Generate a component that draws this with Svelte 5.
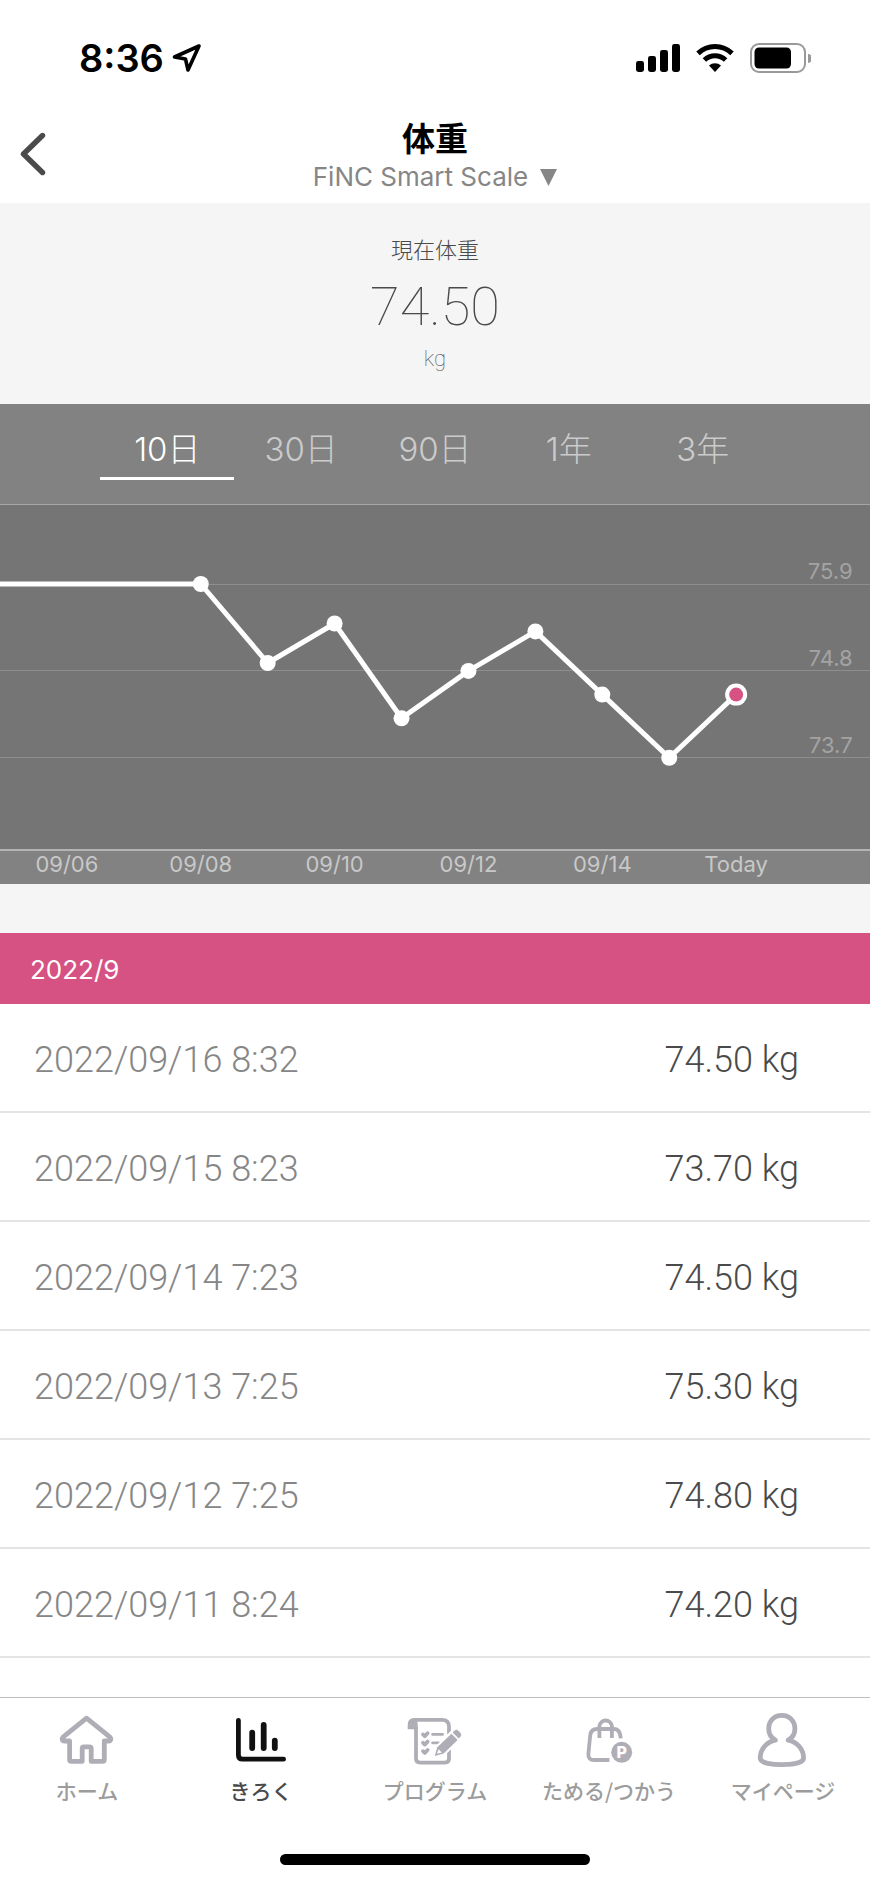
<script lang="ts">
  type IconName = "home" | "record" | "program" | "points" | "mypage";

  const CURRENT = "74.50";

  const RANGES = ["10日", "30日", "90日", "1年", "3年"];

  // The plot is divided into 13 equal day columns
  const COLUMNS = 13;
  const FIRST_COLUMN = 3;
  const PLOT_HEIGHT = 344;
  const TOP_VALUE = 75.9;
  const TOP_Y = 79;
  const PX_PER_KG = 79;

  const gridValues = [75.9, 74.8, 73.7];
  const weights = [75.9, 74.9, 75.4, 74.2, 74.8, 75.3, 74.5, 73.7, 74.5];
  const axisLabels = ["09/06", "09/08", "09/10", "09/12", "09/14", "Today"];

  const records = [
    { date: "2022/09/16 8:32", weight: "74.50 kg" },
    { date: "2022/09/15 8:23", weight: "73.70 kg" },
    { date: "2022/09/14 7:23", weight: "74.50 kg" },
    { date: "2022/09/13 7:25", weight: "75.30 kg" },
    { date: "2022/09/12 7:25", weight: "74.80 kg" },
    { date: "2022/09/11 8:24", weight: "74.20 kg" },
  ];

  const navItems: { icon: IconName; label: string }[] = [
    { icon: "home", label: "ホーム" },
    { icon: "record", label: "きろく" },
    { icon: "program", label: "プログラム" },
    { icon: "points", label: "ためる/つかう" },
    { icon: "mypage", label: "マイページ" },
  ];

  let range = $state("10日");
  let activeNav = $state<IconName>("record");

  function yOf(value: number) {
    return TOP_Y + (TOP_VALUE - value) * PX_PER_KG;
  }

  const points = weights.map((value, i) => ({
    x: `${((FIRST_COLUMN + i) / COLUMNS) * 100}%`,
    y: yOf(value),
  }));
  const lastPoint = points[points.length - 1];
</script>

<div class="screen">
  <div class="status-bar">
    <div class="clock">
      <span>8:36</span>
      <svg width="30" height="30" viewBox="0 0 30 30" aria-hidden="true">
        <path
          d="M27 3 L2.5 14 L13.5 16 L16 27 Z"
          fill="none"
          stroke="#000"
          stroke-width="3.6"
          stroke-linejoin="round"
        />
      </svg>
    </div>
    <div class="indicators">
      <svg width="44" height="28" viewBox="0 0 44 28" aria-hidden="true">
        <rect x="0" y="17" width="8" height="11" rx="2.4" />
        <rect x="12" y="12" width="8" height="16" rx="2.4" />
        <rect x="24" y="6" width="8" height="22" rx="2.4" />
        <rect x="36" y="0" width="8" height="28" rx="2.4" />
      </svg>
      <svg width="38" height="28" viewBox="0 0 38 28" aria-hidden="true">
        <g fill="none" stroke="#000" stroke-width="5">
          <path d="M2 9.4 A24.5 24.5 0 0 1 36 9.4" />
          <path d="M8.4 16 A15.5 15.5 0 0 1 29.6 16" />
        </g>
        <path d="M19 28 L13 21.6 A9 9 0 0 1 25 21.6 Z" />
      </svg>
      <svg width="61" height="30" viewBox="0 0 61 30" aria-hidden="true">
        <rect x="1" y="1" width="54" height="28" rx="8" fill="none" stroke="#999" stroke-width="2" />
        <rect x="4.5" y="4.5" width="36.5" height="21" rx="4.5" />
        <path d="M58 11 A4.4 4.4 0 0 1 58 20 Z" fill="#999" />
      </svg>
    </div>
  </div>

  <header class="header">
    <button class="back" aria-label="戻る">
      <svg width="26" height="44" viewBox="0 0 26 44" aria-hidden="true">
        <path
          d="M22.5 3.5 L3.5 22 L22.5 40.5"
          fill="none"
          stroke="#4a4a4a"
          stroke-width="5.4"
          stroke-linecap="round"
          stroke-linejoin="round"
        />
      </svg>
    </button>
    <div class="titles">
      <h1>体重</h1>
      <button class="device">
        FiNC Smart Scale
        <svg width="17" height="17" viewBox="0 0 17 17" aria-hidden="true">
          <path d="M0 0 H17 L8.5 17 Z" fill="#868686" />
        </svg>
      </button>
    </div>
  </header>

  <section class="current">
    <p class="current-label">現在体重</p>
    <p class="current-value">{CURRENT}</p>
    <p class="current-unit">kg</p>
  </section>

  <section class="graph">
    <div class="ranges">
      {#each RANGES as item}
        <button class="range" class:active={range === item} onclick={() => (range = item)}>
          {item}
        </button>
      {/each}
    </div>

    <svg class="plot" width="100%" height={PLOT_HEIGHT} role="img" aria-label="体重グラフ">
      {#each gridValues as value}
        <line class="grid" x1="0" x2="100%" y1={yOf(value)} y2={yOf(value)} />
        <text class="grid-label" x="98%" y={yOf(value) - 5}>{value}</text>
      {/each}
      <line class="trend" x1="0" x2={points[0].x} y1={points[0].y} y2={points[0].y} />
      {#each points.slice(1) as point, i}
        <line class="trend" x1={points[i].x} y1={points[i].y} x2={point.x} y2={point.y} />
      {/each}
      {#each points as point}
        <circle cx={point.x} cy={point.y} r="8" fill="#fff" />
      {/each}
      <circle cx={lastPoint.x} cy={lastPoint.y} r="11" fill="#fff" />
      <circle cx={lastPoint.x} cy={lastPoint.y} r="7" fill="#d65282" />
    </svg>

    <div class="axis">
      {#each axisLabels as label}
        <span>{label}</span>
      {/each}
    </div>
  </section>

  <section class="history">
    <h2>2022/9</h2>
    <table>
      <tbody>
        {#each records as record}
          <tr>
            <td class="date">{record.date}</td>
            <td class="weight">{record.weight}</td>
          </tr>
        {/each}
      </tbody>
    </table>
  </section>

  <footer class="bottom">
    <nav>
      {#each navItems as item}
        <button
          class="nav-item"
          class:active={activeNav === item.icon}
          onclick={() => (activeNav = item.icon)}
        >
          <svg width="60" height="60" viewBox="0 0 60 60" aria-hidden="true">
            {#if item.icon === "home"}
              <path
                class="stroke"
                d="M29.5 8.2 L6 27.2 C4.4 28.7 5.2 31 7.4 31 H12.6 V49.5 Q12.6 51.4 14.5 51.4 H25.2 V38.6 Q25.2 36.8 27 36.8 H32.4 Q34.2 36.8 34.2 38.6 V51.4 H45.5 Q47.3 51.4 47.3 49.5 V31 H51.6 C53.8 31 54.6 28.7 53 27.2 Z"
              />
            {:else if item.icon === "record"}
              <path class="stroke" d="M7.4 10.5 V45 Q7.4 49.2 11.6 49.2 H52.6" />
              <path class="stroke bars" d="M21.2 22.6 V38 M32.7 15 V38 M43.8 30.6 V38" />
            {:else if item.icon === "program"}
              <path
                class="stroke thin"
                d="M11 17 V48.6 Q11 52.6 15 52.6 H40 Q44 52.6 44 48.6 V40 M44 23 V16.5 Q44 9.8 37.3 9.8 H9"
              />
              <path class="solid" d="M2.7 19.3 V15 Q2.7 8 9.4 8 Q12.6 10 12.6 14 V19.3 Z" />
              <path
                class="stroke thin"
                d="M18 24.4 L19.8 26.2 L22.6 23.2 M18 32.8 L19.8 34.6 L22.6 31.6 M18 41.2 L19.8 43 L22.6 40"
              />
              <path class="stroke line" d="M27.6 24.4 H37.6 M27.6 32.8 H33.6" />
              <path class="knockout" d="M29.7 46 L32.3 37.3 L47 22.6 L52 20 L56.6 25 L53.4 29.4 L38.7 43.6 Z" />
              <path class="solid" d="M29.7 46 L32.3 37.3 L46.4 23.7 L52.6 30 L38.7 43.6 Z" />
              <path class="solid" d="M47.6 22.5 L49.4 20.7 Q51.4 19 53.4 20.8 L55.4 22.8 Q57.2 24.8 55.4 26.8 L53.8 28.6 Z" />
              <path class="hole" d="M32 43.8 L33.6 39.2 L36.8 42.4 Z" />
            {:else if item.icon === "points"}
              <path
                class="stroke thin butt"
                d="M30.4 50 H15 Q9 50 9.4 43.6 L11.2 25.4 Q12 19 18 19 H35.4 Q41 19 41.8 28.4"
              />
              <path class="stroke thin butt" d="M20.4 28 V16 A6.3 6.3 0 0 1 32.9 16 V28" />
              <circle class="solid" cx="42.7" cy="42.3" r="10.5" />
              <text class="coin" x="42.7" y="48">P</text>
            {:else}
              <path
                class="stroke"
                d="M22.4 30.2 C18.2 27.8 15.7 23.8 15.7 18.8 C15.7 11 21.2 5.4 28.8 5.4 C36.4 5.4 41.9 11 41.9 18.8 C41.9 23.8 39.4 27.8 35.2 30.2 C44.2 31.8 50.6 39.6 50.6 48 C50.6 53.4 37.6 54.6 28.8 54.6 C20 54.6 7.2 53.4 7.2 48 C7.2 39.6 13.4 31.8 22.4 30.2 Z"
              />
            {/if}
          </svg>
          <span>{item.label}</span>
        </button>
      {/each}
    </nav>
    <div class="home-indicator"></div>
  </footer>
</div>

<style>
  :global(body) {
    margin: 0;
    background: #fff;
  }

  .screen {
    display: flex;
    flex-direction: column;
    min-height: 100vh;
    background: #fff;
    color: #4a4a4a;
    font-family: Inter, "Noto Sans CJK JP", sans-serif;
  }

  button {
    padding: 0;
    background: none;
    border: none;
    color: inherit;
    font: inherit;
    cursor: pointer;
  }

  h1,
  h2,
  p {
    margin: 0;
    font-weight: 400;
  }

  svg {
    display: block;
  }

  .status-bar {
    display: flex;
    align-items: center;
    justify-content: space-between;
    height: 116px;
    padding: 0 59px 0 79px;
    color: #000;
  }

  .clock {
    display: flex;
    align-items: center;
    gap: 8px;
    font-size: 38px;
    font-weight: 600;
  }

  .indicators {
    display: flex;
    align-items: center;
    gap: 16px;
  }

  .header {
    display: grid;
    grid-template-columns: 80px 1fr 80px;
    padding: 3px 0 8px;
  }

  .back {
    display: flex;
    align-items: center;
    height: 70px;
    padding-left: 20px;
  }

  .titles {
    display: flex;
    flex-direction: column;
    align-items: center;
  }

  h1 {
    color: #000;
    font-size: 33px;
    font-weight: 700;
    line-height: 40px;
  }

  .device {
    display: flex;
    align-items: center;
    gap: 12px;
    color: #868686;
    font-size: 26px;
    line-height: 36px;
  }

  .current {
    padding: 31px 0 33px;
    background: #f5f5f5;
    text-align: center;
  }

  .current-label {
    font-size: 22px;
    font-weight: 300;
    line-height: 32px;
  }

  .current-value {
    font-family: Roboto, sans-serif;
    font-size: 54px;
    font-weight: 100;
    line-height: 81px;
  }

  .current-unit {
    font-family: Roboto, sans-serif;
    font-size: 22px;
    font-weight: 100;
    line-height: 24px;
  }

  .graph {
    background: #828282;
  }

  .ranges {
    display: grid;
    grid-template-columns: repeat(5, 1fr);
    padding: 0 11.54% 24px;
    border-bottom: 1px solid #a6a6a6;
  }

  .range {
    height: 76px;
    padding-top: 16px;
    border-bottom: 3px solid transparent;
    color: #cbcbcb;
    font-size: 33px;
    font-weight: 300;
    line-height: 40px;
  }

  .range.active {
    border-color: #fff;
    color: #fff;
  }

  .plot {
    background: #757575;
  }

  .grid {
    stroke: #8e8e8e;
    stroke-width: 1;
    shape-rendering: crispEdges;
  }

  .grid-label {
    fill: #a3a3a3;
    font-size: 22px;
    text-anchor: end;
  }

  .trend {
    stroke: #fff;
    stroke-width: 5;
  }

  .axis {
    display: grid;
    grid-template-columns: repeat(13, 1fr);
    height: 33px;
    border-top: 2px solid #b4b4b4;
    color: #c8c8c8;
    font-size: 22px;
    line-height: 26px;
    text-align: center;
  }

  .axis span {
    grid-column: span 2;
  }

  .history {
    padding-top: 49px;
    background: #f5f5f5;
  }

  h2 {
    padding: 3px 30px 0;
    background: #d65282;
    color: #fff;
    font-size: 26px;
    line-height: 68px;
  }

  table {
    width: 100%;
    border-collapse: collapse;
    background: #fff;
    font-family: Roboto, sans-serif;
    font-size: 36px;
    font-weight: 300;
  }

  td {
    height: 103px;
    padding: 4px 34px 0;
    border-bottom: 2px solid #e4e4e4;
  }

  .date {
    color: #868686;
  }

  .weight {
    padding-right: 71px;
    text-align: right;
  }

  .bottom {
    margin-top: auto;
    padding: 12px 0 18px;
    border-top: 1px solid #bdbdbd;
  }

  nav {
    display: grid;
    grid-template-columns: repeat(5, 1fr);
  }

  .nav-item {
    display: flex;
    flex-direction: column;
    align-items: center;
    gap: 8px;
    color: #afaeb7;
    font-family: "Noto Sans CJK JP", sans-serif;
    font-size: 21px;
    font-weight: 500;
    line-height: 24px;
  }

  .nav-item span {
    color: #9c9c9c;
  }

  .nav-item.active {
    color: #111;
  }

  .nav-item.active span {
    color: #4a4a4a;
  }

  .stroke {
    fill: none;
    stroke: currentColor;
    stroke-width: 4.8;
    stroke-linecap: round;
    stroke-linejoin: round;
  }

  .stroke.bars {
    stroke-width: 5.8;
  }

  .stroke.thin {
    stroke-width: 3.8;
  }

  .stroke.line {
    stroke-width: 2.8;
  }

  .stroke.butt {
    stroke-linecap: butt;
  }

  .solid {
    fill: currentColor;
  }

  .knockout {
    fill: #fff;
    stroke: #fff;
    stroke-width: 4;
  }

  .hole {
    fill: #fff;
  }

  .coin {
    fill: #fff;
    font-family: Inter, sans-serif;
    font-size: 16px;
    font-weight: 800;
    text-anchor: middle;
  }

  .home-indicator {
    width: 310px;
    height: 11px;
    margin: 52px auto 0;
    background: #000;
    border-radius: 6px;
  }
</style>
